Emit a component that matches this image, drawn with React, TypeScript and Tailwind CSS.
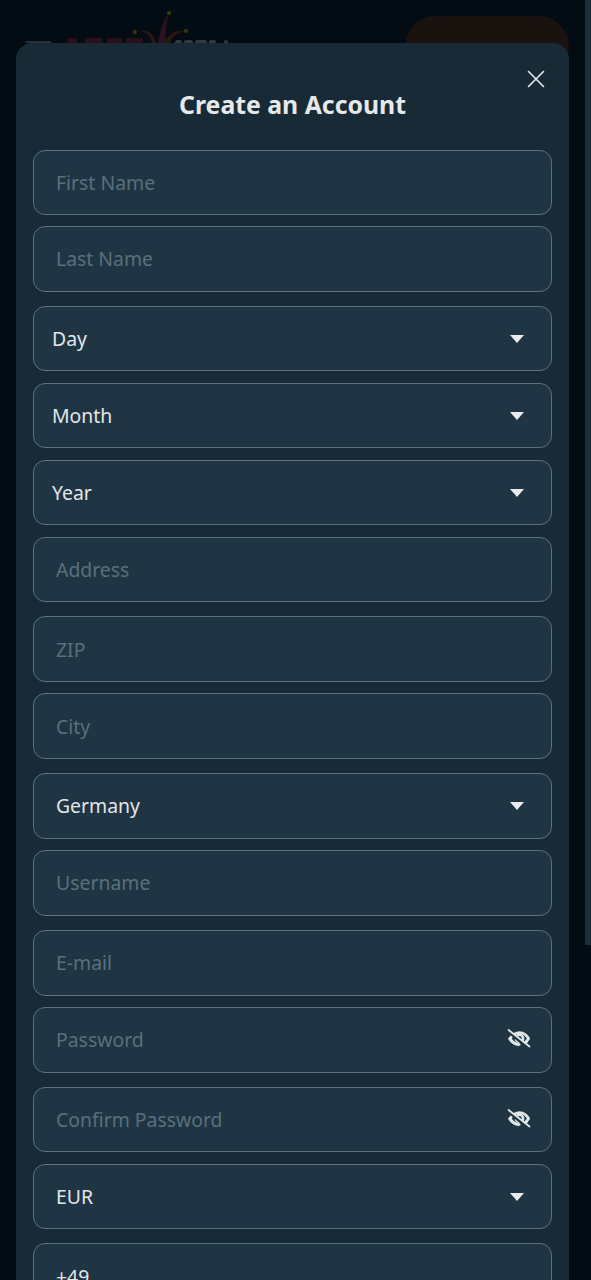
const font = { fontFamily: '"Noto Sans", sans-serif' };

function Chevron() {
  return (
    <svg width="14" height="8" viewBox="0 0 14 8" className="absolute right-[27px] top-[28px]">
      <path d="M0 0H14L7 8Z" fill="#e8ecee" />
    </svg>
  );
}

function EyeOff() {
  return (
    <svg width="24" height="20" viewBox="0 0 24 20" fill="none" className="absolute right-[20px] top-[21px]">
      <path d="M3 9.5C6 5 9.5 3.6 12.5 3.6C16.5 3.6 19.5 6 21.5 9.5C20.5 11.5 19 13.5 17 14.5" stroke="#e3e6e8" strokeWidth="2.8" strokeLinecap="round" />
      <path d="M3 9.8C5 13 8 15.2 12 15.5" stroke="#e3e6e8" strokeWidth="3.2" strokeLinecap="round" />
      <circle cx="12.5" cy="9.4" r="3.6" stroke="#e3e6e8" strokeWidth="2.6" />
      <path d="M1.5 2.4L21 18.6" stroke="#203543" strokeWidth="3.4" />
      <path d="M1.5 1L22.5 17.5" stroke="#e3e6e8" strokeWidth="1.8" strokeLinecap="round" />
    </svg>
  );
}

type FieldProps = { label: string; kind?: "placeholder" | "select" | "password" | "value"; inset?: boolean; mt: string };

function Field({ label, kind = "placeholder", inset = false, mt }: FieldProps) {
  const isPlaceholder = kind === "placeholder" || kind === "password";
  return (
    <div className={`relative h-[65.5px] rounded-[12px] border-[1.5px] border-[#5e707b] bg-[#203543] flex items-center shrink-0 ${mt} ${inset ? "pl-[18px]" : "pl-[22px]"}`}>
      <span className={`text-[19.4px] leading-none ${isPlaceholder ? "text-[#5a6f7c]" : "text-[#e2e6e8]"}`}>{label}</span>
      {kind === "select" && <Chevron />}
      {kind === "password" && <EyeOff />}
    </div>
  );
}

export default function App() {
  return (
    <div className="relative w-[591px] h-[1280px] overflow-hidden bg-[#020c12]" style={font}>
      <div className="absolute left-[585px] top-0 w-[6px] h-[945px] bg-[#1a2d3a]" />

      <div className="absolute left-[405px] top-[16px] w-[164px] h-[60px] rounded-[32px] bg-[#19120f]" />
      <div className="absolute left-[26px] top-[41px] w-[25px] h-[2px] bg-[#253039]" />
      <svg width="170" height="34" viewBox="0 0 170 34" className="absolute left-[66px] top-[9px]">
        <rect x="2" y="29" width="9" height="6" fill="#2a1019" />
        <rect x="19" y="29" width="17" height="6" fill="#2a1019" />
        <rect x="41" y="29" width="15" height="6" fill="#2a1019" />
        <rect x="60" y="29" width="17" height="6" fill="#2a1019" />
        <path d="M90 34C88 24 82 20 70 22C80 22 84 26 86 34Z" fill="#2b1710" />
        <path d="M92 34C94 20 98 10 103 4C100 14 99 24 100 34Z" fill="#2a1320" />
        <path d="M98 34C102 26 108 21 119 22C110 24 106 28 104 34Z" fill="#2b1710" />
        <circle cx="69" cy="23" r="2" fill="#3b3a0c" />
        <circle cx="103" cy="4" r="2" fill="#3b3a0c" />
        <circle cx="120" cy="22" r="2" fill="#3b3a0c" />
        <rect x="109" y="31" width="7" height="4" rx="3" fill="#33393e" />
        <rect x="118" y="31" width="9" height="4" rx="3" fill="#33393e" />
        <rect x="129" y="31" width="12" height="4" rx="3" fill="#33393e" />
        <rect x="143" y="31" width="7" height="4" rx="3" fill="#33393e" />
        <rect x="158" y="31" width="4" height="4" rx="2" fill="#33393e" />
      </svg>

      <div className="absolute left-[16px] top-[43px] w-[553px] h-[1300px] rounded-t-[16px] bg-[#182a36] px-[17px] pt-[41px] flex flex-col">
        <svg width="18" height="18" viewBox="0 0 18 18" className="absolute right-[24px] top-[27px]" fill="none">
          <path d="M1.5 1.5L16.5 16.5M16.5 1.5L1.5 16.5" stroke="#e4e7e9" strokeWidth="1.6" strokeLinecap="round" />
        </svg>
        <h2 className="text-center text-[24.8px] leading-[40px] font-bold text-[#e6e8ea]">Create an Account</h2>
        <Field label="First Name" mt="mt-[25.6px]" />
        <Field label="Last Name" mt="mt-[11.3px]" />
        <Field label="Day" kind="select" inset mt="mt-[14.1px]" />
        <Field label="Month" kind="select" inset mt="mt-[11.5px]" />
        <Field label="Year" kind="select" inset mt="mt-[11.5px]" />
        <Field label="Address" mt="mt-[11.5px]" />
        <Field label="ZIP" mt="mt-[14px]" />
        <Field label="City" mt="mt-[11.5px]" />
        <Field label="Germany" kind="select" mt="mt-[14.4px]" />
        <Field label="Username" mt="mt-[11.5px]" />
        <Field label="E-mail" mt="mt-[14.5px]" />
        <Field label="Password" kind="password" mt="mt-[11.5px]" />
        <Field label="Confirm Password" kind="password" mt="mt-[13.7px]" />
        <Field label="EUR" kind="select" mt="mt-[11.5px]" />
        <Field label="+49" kind="value" mt="mt-[14.4px]" />
      </div>
    </div>
  );
}
